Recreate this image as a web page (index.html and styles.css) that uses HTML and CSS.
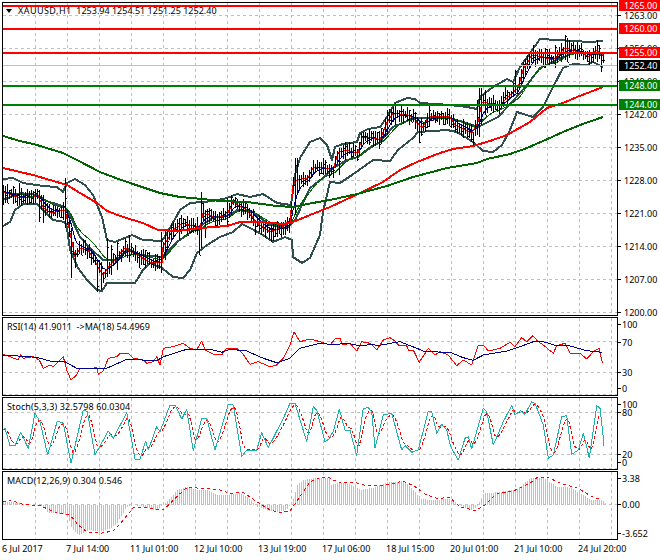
FILE: index.html
```html
<!DOCTYPE html>
<html lang="en">
<head>
<meta charset="utf-8">
<title>XAUUSD,H1</title>
<link rel="stylesheet" href="styles.css">
</head>
<body>
<main class="terminal">
  <section class="pane pane-main">
    <div class="plot">
      <svg id="main" class="canvas" viewBox="3 3 614 312" width="614" height="312"></svg>
      <i class="menu-arrow"></i>
      <p class="legend legend-main"><span class="symbol">XAUUSD,H1</span>&nbsp; 1253.94 1254.51 1251.25 1252.40</p>
    </div>
    <div class="axis">
      <span class="tick" style="top:8px">1263.00</span>
      <span class="tick" style="top:41px">1256.00</span>
      <span class="tick" style="top:74px">1249.00</span>
      <span class="tick" style="top:107px">1242.00</span>
      <span class="tick" style="top:140px">1235.00</span>
      <span class="tick" style="top:173px">1228.00</span>
      <span class="tick" style="top:206px">1221.00</span>
      <span class="tick" style="top:239px">1214.00</span>
      <span class="tick" style="top:272px">1207.00</span>
      <span class="tick" style="top:305px">1200.00</span>
      <span class="flag flag-red" style="top:-2px">1265.00</span>
      <span class="flag flag-red" style="top:21px">1260.00</span>
      <span class="flag flag-red" style="top:45px">1255.00</span>
      <span class="flag flag-black" style="top:58px">1252.40</span>
      <span class="flag flag-green" style="top:78px">1248.00</span>
      <span class="flag flag-green" style="top:97px">1244.00</span>
    </div>
  </section>
  <section class="pane pane-rsi">
    <div class="plot">
      <svg id="rsi" class="canvas" viewBox="3 318 614 77" width="614" height="77"></svg>
      <p class="legend">RSI(14) 41.9011&nbsp; -&gt;MA(18) 54.4969</p>
    </div>
    <div class="axis">
      <span class="tick short" style="top:2px">100</span>
      <span class="tick short" style="top:20px">70</span>
      <span class="tick short" style="top:50px">30</span>
      <span class="tick short" style="top:66px">0</span>
    </div>
  </section>
  <section class="pane pane-stoch">
    <div class="plot">
      <svg id="stoch" class="canvas" viewBox="3 398 614 71" width="614" height="71"></svg>
      <p class="legend legend-wide">Stoch(5,3,3) 32.5798 60.0304</p>
    </div>
    <div class="axis">
      <span class="tick short" style="top:2px">100</span>
      <span class="tick short" style="top:10px">80</span>
      <span class="tick short" style="top:52px">20</span>
      <span class="tick short" style="top:60px">0</span>
    </div>
  </section>
  <section class="pane pane-macd">
    <div class="plot">
      <svg id="macd" class="canvas" viewBox="3 472 614 67" width="614" height="67"></svg>
      <p class="legend legend-wide">MACD(12,26,9) 0.304 0.546</p>
    </div>
    <div class="axis">
      <span class="tick short" style="top:2px">3.38</span>
      <span class="tick short" style="top:28px">0.00</span>
      <span class="tick short" style="top:57px">-3.652</span>
    </div>
  </section>
  <footer class="time-axis">
    <span>6 Jul 2017</span>
    <span>7 Jul 14:00</span>
    <span>11 Jul 01:00</span>
    <span>12 Jul 10:00</span>
    <span>13 Jul 19:00</span>
    <span>17 Jul 06:00</span>
    <span>18 Jul 15:00</span>
    <span>20 Jul 01:00</span>
    <span>21 Jul 10:00</span>
    <span>24 Jul 20:00</span>
  </footer>
</main>
<script src="chart.js"></script>
</body>
</html>
```
FILE: styles.css
```css
* { box-sizing: border-box; }
html, body { margin: 0; height: 100%; background: #fff; overflow: hidden; }
body { font: 9px/11px "Noto Sans", "Liberation Sans", sans-serif; color: #000; }
.terminal { display: flex; flex-direction: column; gap: 1px; width: 660px; height: 560px; padding: 2px 0 0 2px; }
.pane { display: flex; flex: none; }
.pane-main { height: 314px; }
.pane-rsi { height: 79px; }
.pane-stoch { height: 73px; }
.pane-macd { height: 69px; }
.plot { position: relative; width: 616px; border: 1px solid #000; }
.canvas { display: block; }
.axis { position: relative; width: 42px; }
.legend { position: absolute; left: 4px; top: 3px; margin: 0; white-space: nowrap; }
.legend-wide { letter-spacing: .1px; }
.legend-main { left: 15px; top: 2px; }
.symbol { letter-spacing: .45px; }
.menu-arrow { position: absolute; left: 3px; top: 6px; border: solid transparent; border-width: 4px 3.5px 0; border-top-color: #000; }
.tick, .flag { position: absolute; height: 11px; white-space: nowrap; }
.tick { left: 6px; }
.tick::before { content: ""; position: absolute; left: -6px; top: 5px; width: 3px; height: 1px; background: #000; }
.short { left: 4px; }
.short::before { left: -4px; }
.flag { left: 1px; width: 41px; padding-left: 5px; color: #fff; }
.flag-red { background: #f00; }
.flag-black { background: #000; }
.flag-green { background: #008000; }
.time-axis { display: grid; grid-template-columns: repeat(10, 64px); height: 16px; line-height: 16px; white-space: nowrap; }
.grid { stroke: #c0c0c0; stroke-width: 1; stroke-dasharray: 3 3; fill: none; shape-rendering: crispEdges; }
.crisp, .line { fill: none; shape-rendering: crispEdges; stroke-linejoin: round; }
.bars { stroke: #000; stroke-width: 1; }
.hist { stroke: #c0c0c0; stroke-width: 1; }
.bb { stroke: #2f4f4f; stroke-width: 2; }
.ma-long { stroke: #006400; stroke-width: 2; }
.ma-mid { stroke: #f00; stroke-width: 2; }
.thin-green { stroke: #006400; stroke-width: 1; }
.thin-blue { stroke: #00008b; stroke-width: 1; }
.thin-red { stroke: #f00; stroke-width: 1; }
.navy { stroke: #00008b; stroke-width: 1; }
.teal { stroke: #20b2aa; stroke-width: 1; }
.red-dash { stroke: #f00; stroke-width: 1; stroke-dasharray: 3 3; }
.red-dash-bold { stroke: #f00; stroke-width: 1; stroke-dasharray: 3 2; }
.level-red { stroke: #f00; stroke-width: 2; }
.level-green { stroke: #008000; stroke-width: 2; }
.level-price { stroke: #c0c0c0; stroke-width: 1; }
```
FILE: chart.js
```js
(function () {
  var NS = "http://www.w3.org/2000/svg";
  function add(svg, tag, attrs) {
    var el = document.createElementNS(NS, tag);
    for (var k in attrs) el.setAttribute(k, attrs[k]);
    svg.appendChild(el);
    return el;
  }
  function pairs(a) { var r = []; for (var i = 0; i < a.length; i += 2) r.push([a[i], a[i + 1]]); return r; }
  function zoomed(a, ox, oy) { return pairs(a).map(function (p) { return [ox + p[0] / 3, oy + p[1] / 3]; }); }
  function line(svg, pts, cls) {
    add(svg, "polyline", { "class": "line " + cls, points: pts.map(function (p) { return p[0].toFixed(1) + "," + p[1].toFixed(1); }).join(" ") });
  }
  function at(pts, x) {
    if (x <= pts[0][0]) return pts[0][1];
    for (var i = 1; i < pts.length; i++) {
      if (x <= pts[i][0]) {
        var a = pts[i - 1], b = pts[i];
        return a[1] + (b[1] - a[1]) * (x - a[0]) / (b[0] - a[0] || 1);
      }
    }
    return pts[pts.length - 1][1];
  }
  function grid(svg, top, bottom, rows) {
    var d = "";
    for (var x = 35.5; x < 617; x += 32) d += "M" + x + " " + top + "V" + bottom;
    rows.forEach(function (y) { d += "M3 " + y + "H617"; });
    add(svg, "path", { "class": "grid", d: d });
  }
  var seed = 7;
  function rnd() { seed = (seed * 1103515245 + 12345) & 0x7fffffff; return seed / 0x7fffffff; }

  /* ---------- main chart ---------- */
  var price = pairs([3,192,17,197,30,198,38,195,43,207,50,213,65,210,68,223,75,257,80,248,88,250,98,267,103,275,110,265,125,248,137,255,150,262,162,263,163,247,173,230,183,223,200,228,203,213,217,218,227,215,233,202,247,210,257,223,270,232,280,228,290,223,293,185,297,180,308,178,313,168,323,167,333,170,338,153,345,150,358,153,362,138,370,137,380,140,387,122,393,113,407,115,413,118,422,128,428,118,433,116,450,117,455,125,472,133,478,122,482,102,487,103,500,105,508,97,518,88,523,70,532,55,543,57,553,60,565,48,583,53,588,57,597,50,603,55]);
  var upper = pairs([3,179,13,178,23,183,43,186,57,187,63,192,67,183,75,179,85,185,93,195,102,217,107,240,115,242,132,235,143,240,162,241,170,228,180,210,190,203,203,202,213,201,227,198,237,194,250,197,263,194,277,203,291,205,295,175,300,158,310,142,320,138,327,145,332,160,335,147,343,144,357,142,360,133,368,129,380,127,387,117,395,103,407,98,415,99,420,103,450,105,467,107,477,109,480,97,493,87,507,79,513,82,520,67,530,53,540,39,557,40,573,41,590,42,603,41]);
  var middle = pairs([3,200,20,193,37,195,43,200,53,203,65,207,72,220,80,237,90,248,103,260,117,260,128,249,140,255,162,257,177,242,197,228,213,218,230,215,237,210,253,212,270,225,287,228,295,220,310,188,323,178,333,168,347,160,358,157,370,148,380,142,393,127,405,122,413,118,450,118,463,122,478,127,498,117,512,102,527,85,540,68,557,60,573,53,587,53,603,55]);
  var lower = pairs([3,226,10,222,15,210,23,204,37,204,43,210,53,220,65,222,67,228,70,250,78,268,87,280,97,290,102,291,107,283,135,283,143,270,150,263,162,268,173,277,183,278,190,270,197,253,207,245,220,237,233,232,242,224,250,228,263,235,273,242,285,237,292,240,293,257,302,263,310,258,320,235,323,212,330,182,340,183,352,175,373,160,390,161,398,150,413,138,418,132,447,130,457,132,473,142,483,151,493,152,502,145,510,130,517,112,533,117,543,107,553,87,563,68,573,64,587,65,593,62,603,67]);
  var ma100 = pairs([3,168,33,175,50,180,67,185,80,193,97,203,107,211,123,217,143,223,158,230,177,231,200,228,227,226,240,222,260,222,283,224,293,222,310,215,330,207,360,193,383,182,400,170,417,162,440,153,453,149,473,146,490,141,507,135,530,122,547,108,563,103,577,97,603,87]);
  var ma200 = pairs([3,136,20,141,37,145,53,150,63,153,77,160,100,172,113,177,133,184,160,193,180,197,203,199,220,201,247,202,277,206,293,207,307,204,330,200,357,194,387,186,413,177,447,168,477,163,487,159,510,154,527,148,543,141,563,132,580,125,603,117]);
  var spikes = { 3:[185,205],19:[183,205],39:[190,222],43:[195,223],65:[178,228],71:[228,278],75:[250,268],97:[260,292],101:[262,290],107:[238,277],111:[245,275],117:[242,270],129:[235,262],139:[252,268],161:[232,273],165:[230,260],179:[218,240],187:[216,235],199:[230,255],201:[192,248],205:[210,238],227:[198,225],231:[195,215],255:[220,235],271:[225,242],283:[222,235],295:[158,215],297:[158,195],339:[148,175],387:[110,135],395:[103,125],419:[122,143],429:[105,127],473:[132,147],477:[100,135],479:[88,137],481:[88,125],485:[90,115],505:[85,100],515:[70,93],535:[50,67],545:[48,68],555:[45,68],565:[35,60],567:[38,62],589:[50,66],597:[40,62],601:[54,72] };
  var main = document.getElementById("main");
  grid(main, 3, 315, [15.5, 48.5, 81.5, 114.5, 147.5, 180.5, 213.5, 246.5, 279.5, 312.5]);
  var d = "", smoothA = [], smoothB = [], a = null, b = null;
  for (var x = 3; x <= 603; x += 2) {
    var c = at(price, x), s = spikes[x];
    var hi = s ? s[0] : c - 3 - rnd() * 7, lo = s ? s[1] : c + 3 + rnd() * 7;
    var open = hi + (lo - hi) * rnd(), close = hi + (lo - hi) * rnd();
    d += "M" + (x + .5) + " " + Math.round(hi) + "V" + Math.round(lo);
    d += "M" + (x - .5) + " " + (Math.round(open) + .5) + "h1";
    d += "M" + (x + .5) + " " + (Math.round(close) + .5) + "h1";
    a = a === null ? c : a + (c - a) * .3;
    b = b === null ? c : b + (c - b) * .12;
    smoothA.push([x, a]);
    smoothB.push([x, b]);
  }
  line(main, upper, "bb");
  line(main, middle, "bb");
  line(main, lower, "bb");
  line(main, smoothB, "thin-green");
  line(main, smoothA, "thin-blue");
  line(main, price, "thin-red");
  add(main, "path", { "class": "crisp bars", d: d });
  line(main, ma100, "ma-mid");
  line(main, ma200, "ma-long");
  [[6, "red"], [29, "red"], [53, "red"], [86, "green"], [105, "green"]].forEach(function (l) {
    add(main, "path", { "class": "crisp level-" + l[1], d: "M3 " + l[0] + "H617" });
  });
  add(main, "path", { "class": "crisp level-price", d: "M3 65.5H617" });

  /* ---------- RSI ---------- */
  var rsi = document.getElementById("rsi");
  grid(rsi, 318, 395, [341.5, 372.5, 394.5]);
  line(rsi, zoomed([8,118,30,125,55,135,62,118,70,130,100,125,118,135,130,160,150,150,160,155,175,140,190,125,200,165,213,195,230,180,240,160,260,162,290,158,295,178,310,168,325,130,350,125,360,115,385,115,400,130,430,135,440,145,460,140,470,125,480,150,490,100,520,95,550,85,570,100,590,105,605,78,615,105,640,118,665,120,680,100,710,100,725,112,750,148,775,140,810,155,830,150,850,130,870,90,882,50,900,80,930,72,960,80,990,90], 0, 315).concat(
    zoomed([0,90,15,72,30,70,38,90,60,85,80,108,95,80,120,85,140,105,160,75,180,68,195,78,205,90,230,92,235,105,250,105,268,142,295,100,315,120,330,110,355,120,380,152,400,135,425,150,445,90,460,90,475,108,510,100,540,82,555,95,575,68,590,80,608,62,625,80,640,90,670,115,680,92,705,85,720,115,750,115,770,132,790,110,808,100,815,135,818,143], 330, 315)), "thin-red");
  line(rsi, zoomed([8,120,110,127,150,138,195,140,230,160,300,160,320,160,380,133,470,137,490,125,560,103,640,105,665,112,690,103,740,108,790,130,830,143,870,130,900,100,960,85,990,88], 0, 315).concat(
    zoomed([0,90,50,85,90,92,130,88,140,92,210,80,260,100,285,110,360,112,400,128,430,136,460,120,530,108,570,95,610,80,640,80,680,92,720,93,770,107,815,112], 330, 315)), "navy");

  /* ---------- Stochastic ---------- */
  var stoch = document.getElementById("stoch");
  grid(stoch, 398, 469, [412.5, 454.5, 468.5]);
  var st = zoomed([8,345,15,340,30,392,45,392,62,352,85,400,105,295,120,320,143,420,172,318,190,325,213,445,250,285,262,290,285,420,325,348,340,370,380,293,405,432,420,432,437,378,445,405,470,335,480,350,510,270,525,270,545,312,560,283,580,408,605,310,620,310,645,405,685,268,700,270,725,425,740,405,770,405,785,353,805,398,850,310,870,265,885,265,920,380,940,275,950,285,975,380,990,370], 0, 315).concat(
    zoomed([0,365,10,350,28,282,45,345,60,345,80,422,100,280,115,278,125,290,135,398,160,300,185,295,215,405,225,392,245,412,265,405,295,288,305,290,320,355,335,328,350,345,362,395,385,435,405,370,415,365,425,402,460,280,470,290,490,390,520,320,545,272,555,300,572,287,585,298,605,260,615,265,640,330,655,430,670,420,695,305,710,302,725,418,745,405,760,355,778,428,800,272,810,280,818,350,822,392], 330, 315));
  var sig = [], sv = null;
  for (var sx = 3; sx <= 602; sx += 2) {
    var v = at(st, sx - 1);
    sv = sv === null ? v : sv + (v - sv) * .45;
    sig.push([sx, sv]);
  }
  line(stoch, sig, "red-dash-bold");
  line(stoch, st, "teal");

  /* ---------- MACD ---------- */
  var macd = document.getElementById("macd");
  grid(macd, 472, 539, [504.5]);
  var hist = zoomed([8,108,60,115,100,120,130,125,145,145,170,145,200,150,215,190,235,212,265,195,300,200,330,190,350,175,380,125,400,120,430,125,470,135,490,118,510,100,530,75,560,65,590,75,620,75,650,90,680,90,720,85,740,95,770,125,800,135,830,142,860,135,880,100,890,60,910,45,940,40,990,40], 0, 465).concat(
    zoomed([0,60,30,52,60,58,90,75,130,68,170,52,220,48,250,75,270,100,300,105,360,102,380,115,420,135,440,125,460,85,500,82,560,72,600,40,640,40,680,65,720,68,760,90,780,105,815,105,830,118], 330, 465));
  var hd = "";
  for (var hx = 3; hx <= 605; hx += 2) hd += "M" + (hx + .5) + " 504.5V" + at(hist, hx).toFixed(0);
  add(macd, "path", { "class": "crisp hist", d: hd });
  line(macd, zoomed([8,110,30,105,70,118,120,122,170,143,210,150,235,180,260,200,300,205,340,198,370,165,400,128,440,128,490,135,530,95,560,68,620,70,660,75,690,85,730,82,770,110,810,135,840,143,870,138,900,95,930,50,960,38,990,38], 0, 465).concat(
    zoomed([0,42,30,52,75,52,110,62,160,62,220,48,255,65,290,90,320,100,360,98,390,125,435,137,465,120,500,85,550,78,600,55,620,38,650,36,700,58,740,68,790,97,815,103], 330, 465)), "red-dash");
})();
```
